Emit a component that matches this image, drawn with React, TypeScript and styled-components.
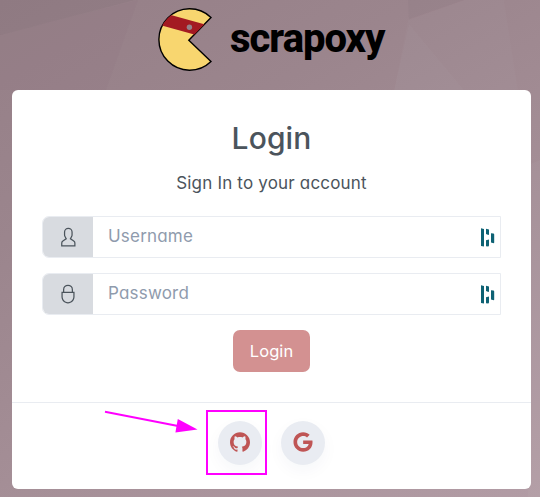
import React from "react";
import styled, { createGlobalStyle } from "styled-components";
import { SiGithub } from "react-icons/si";
import { FaGoogle } from "react-icons/fa";

const GlobalStyle = createGlobalStyle`
  * { box-sizing: border-box; }
  body {
    margin: 0;
    font-family: Inter, "Open Sans", sans-serif;
    font-feature-settings: "cv11", "ss03";
    color: #4f5d73;
  }
`;

const Page = styled.main`
  position: relative;
  width: 540px;
  height: 497px;
  overflow: hidden;
  padding: 0 9px 8px 12px;
  display: flex;
  flex-direction: column;
  background: linear-gradient(150deg, #957f87 0%, #9b858d 30%, #a48e96 60%, #b29ca5 100%);
`;

const Facets = styled.svg`
  position: absolute;
  inset: 0;
`;

const Brand = styled.header`
  position: relative;
  height: 90px;
  padding: 7px 0 0 145px;
  display: flex;
  align-items: flex-start;
`;

const BrandName = styled.span`
  margin: 8px 0 0 6px;
  font: 800 40px/48px Roboto, sans-serif;
  letter-spacing: -1px;
  color: #000;
`;

const Card = styled.section`
  position: relative;
  height: 399px;
  border-radius: 6px;
  background: #fff;
  display: flex;
  flex-direction: column;
`;

const Form = styled.form`
  height: 312px;
  padding: 28px 30px 0;
  display: flex;
  flex-direction: column;
  align-items: center;
`;

const Title = styled.h1`
  margin: 0;
  font-size: 30px;
  font-weight: 500;
  line-height: 40px;
  letter-spacing: 0.1px;
  color: #4b545c;
`;

const Lead = styled.p`
  margin: 13px 0 20px;
  font-size: 17px;
  line-height: 25px;
  letter-spacing: 0.18px;
  color: #4b545c;
`;

const Field = styled.label`
  width: 459px;
  height: 42px;
  margin-bottom: 15px;
  border: 1px solid #e9ecf1;
  border-radius: 7px 0 0 7px;
  display: flex;
  overflow: hidden;
`;

const Addon = styled.span`
  width: 50px;
  background: #d8dbe0;
  display: flex;
  align-items: center;
  justify-content: center;
`;

const Input = styled.input`
  flex: 1;
  min-width: 0;
  border: 0;
  padding: 0 0 2px 15px;
  background: transparent;
  font: inherit;
  font-size: 17px;
  letter-spacing: 0.2px;
  outline: none;
  &::placeholder { color: #8f9bad; opacity: 1; }
`;

const Manager = styled.svg`
  margin: 11px 5px 0 0;
  fill: #0e6274;
`;

const Submit = styled.button`
  width: 77px;
  height: 42px;
  border: 0;
  border-radius: 7px;
  padding: 0;
  background: #d39191;
  color: #fff;
  font: inherit;
  font-size: 16.5px;
  letter-spacing: 0.1px;
`;

const Footer = styled.footer`
  flex: 1;
  border-top: 1px solid #e9ecf1;
  padding: 18px 1px 0 0;
  display: flex;
  justify-content: center;
  gap: 19px;
`;

const Social = styled.button`
  width: 44px;
  height: 44px;
  border: 0;
  border-radius: 50%;
  padding: 0 0 2px;
  background: #e9ecf2;
  color: #bf5555;
  box-shadow: 0 6px 16px rgba(30, 60, 110, 0.04);
  display: flex;
  align-items: center;
  justify-content: center;
`;

const Annotation = styled.svg`
  position: absolute;
  inset: 0;
  pointer-events: none;
`;

const USER =
  "M411.6,343.656l-72.823-47.334,27.455-50.334A80.23,80.23,0,0,0,376,207.681V128a112,112,0,0,0-224,0v79.681a80.236,80.236,0,0,0,9.768,38.308l27.455,50.333L116.4,343.656A79.725,79.725,0,0,0,80,410.732V496H448V410.732A79.727,79.727,0,0,0,411.6,343.656ZM416,464H112V410.732a47.836,47.836,0,0,1,21.841-40.246l97.66-63.479-41.64-76.341A48.146,48.146,0,0,1,184,207.681V128a80,80,0,0,1,160,0v79.681a48.146,48.146,0,0,1-5.861,22.985L296.5,307.007l97.662,63.479h0A47.836,47.836,0,0,1,416,410.732Z";
const LOCK =
  "M384,200V144a128,128,0,0,0-256,0v56H88V328c0,92.635,75.364,168,168,168s168-75.365,168-168V200ZM160,144a96,96,0,0,1,192,0v56H160ZM392,328c0,74.99-61.01,136-136,136s-136-61.01-136-136V232H392Z";

function LoginField({ icon, label, type }: { icon: string; label: string; type: string }) {
  return (
    <Field>
      <Addon>
        <svg width="20" height="20" viewBox="0 0 512 512" fill="#4b545c">
          <path d={icon} />
        </svg>
      </Addon>
      <Input type={type} placeholder={label} />
      <Manager width="14" height="19" viewBox="0 0 14 19">
        <path d="M0 .3L3 .9V18.5L0 18.1ZM5 .8L8 1.6V6.6L7.4 7L5 6.1ZM5 12.2L8 11.5V17.6L7.4 18.5L5 18.3ZM10 5.3L12.6 5.5L13.2 6.2V14.7L12.6 15.3L10 14.6Z" />
      </Manager>
    </Field>
  );
}

function Logo() {
  return (
    <svg width="67" height="66" viewBox="157 7 67 66">
      <clipPath id="body">
        <path d="M211 17.5A30.7 30.7 0 1 0 211 61.5L188.8 40.3Z" />
      </clipPath>
      <path d="M211 17.5A30.7 30.7 0 1 0 211 61.5L188.8 40.3Z" fill="#f8d66f" stroke="#000" strokeWidth="1.4" />
      <path d="M169 14.5L207 25L196 35L160 25Z" fill="#a31a22" clipPath="url(#body)" />
      <circle cx="189.4" cy="27.2" r="2.7" fill="#93828a" />
    </svg>
  );
}

export default function App() {
  return (
    <>
      <GlobalStyle />
      <Page>
        <Facets width="540" height="497" viewBox="0 0 540 497">
          <path d="M0 0H135L0 35Z" fill="#6d5862" opacity=".12" />
          <path d="M138 0L106 90H0V35Z" fill="#6d5862" opacity=".04" />
          <path d="M409 19L464 0H408Z" fill="#6d5862" opacity=".06" />
          <path d="M408 20L464 0H504L518 90H394Z" fill="#fff" opacity=".02" />
          <path d="M409 24L464 90H394Z" fill="#fff" opacity=".02" />
          <path d="M528 165L540 160V497H528Z" fill="#fff" opacity=".03" />
        </Facets>
        <Brand>
          <Logo />
          <BrandName>scrapoxy</BrandName>
        </Brand>
        <Card>
          <Form>
            <Title>Login</Title>
            <Lead>Sign In to your account</Lead>
            <LoginField icon={USER} label="Username" type="text" />
            <LoginField icon={LOCK} label="Password" type="password" />
            <Submit type="button">Login</Submit>
          </Form>
          <Footer>
            <Social aria-label="GitHub"><SiGithub size={20} /></Social>
            <Social aria-label="Google"><FaGoogle size={20} /></Social>
          </Footer>
        </Card>
        <Annotation width="540" height="497" viewBox="0 0 540 497">
          <rect x="207" y="411" width="59" height="63" fill="none" stroke="#f0f" strokeWidth="2" />
          <path d="M105 411.8L178 426" stroke="#f0f" strokeWidth="2" />
          <path d="M197.5 429.6L177.8 419L175.4 432.6Z" fill="#f0f" />
        </Annotation>
      </Page>
    </>
  );
}
